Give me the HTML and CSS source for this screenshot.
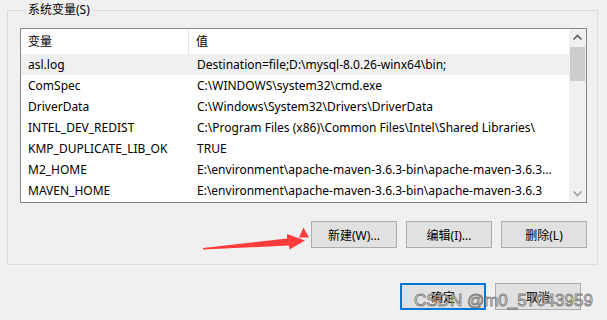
FILE: index.html
```html
<!DOCTYPE html>
<html lang="zh-CN">
<head>
<meta charset="utf-8">
<title>系统变量</title>
<link rel="stylesheet" href="styles.css">
</head>
<body>
<fieldset class="group">
  <legend class="group-title">系统变量(S)</legend>
  <div class="listbox">
    <div class="list">
      <div class="row head"><div class="c1">变量</div><div class="c2">值</div></div>
      <div class="row sel"><div class="c1">asl.log</div><div class="c2">Destination=file;D:\mysql-8.0.26-winx64\bin;</div></div>
      <div class="row"><div class="c1">ComSpec</div><div class="c2">C:\WINDOWS\system32\cmd.exe</div></div>
      <div class="row"><div class="c1">DriverData</div><div class="c2">C:\Windows\System32\Drivers\DriverData</div></div>
      <div class="row"><div class="c1">INTEL_DEV_REDIST</div><div class="c2">C:\Program Files (x86)\Common Files\Intel\Shared Libraries\</div></div>
      <div class="row"><div class="c1">KMP_DUPLICATE_LIB_OK</div><div class="c2">TRUE</div></div>
      <div class="row"><div class="c1">M2_HOME</div><div class="c2">E:\environment\apache-maven-3.6.3-bin\apache-maven-3.6.3...</div></div>
      <div class="row"><div class="c1">MAVEN_HOME</div><div class="c2">E:\environment\apache-maven-3.6.3-bin\apache-maven-3.6.3</div></div>
    </div>
    <div class="scrollbar">
      <div class="sb-btn"><svg width="17" height="17" viewBox="0 0 17 17"><polyline points="4.5,10.5 8.5,6.5 12.5,10.5" fill="none" stroke="#606060" stroke-width="1.6"/></svg></div>
      <div class="track"><div class="thumb"></div></div>
      <div class="sb-btn"><svg width="17" height="17" viewBox="0 0 17 17"><polyline points="4.5,6.5 8.5,10.5 12.5,6.5" fill="none" stroke="#a0a0a0" stroke-width="1.6"/></svg></div>
    </div>
  </div>
  <div class="actions">
    <button class="btn">新建(W)...</button>
    <button class="btn">编辑(I)...</button>
    <button class="btn">删除(L)</button>
  </div>
</fieldset>
<div class="footer">
  <button class="btn primary">确定</button>
  <button class="btn">取消</button>
</div>
<span class="watermark">CSDN @m0_57043959</span>
<svg class="annot" width="607" height="320" viewBox="0 0 607 320">
  <polygon points="203,248 287,238.5 287,234 305,240.5 289.5,249.5 289,245.5 203,249.5" fill="#ff3b3b"/>
  <polygon points="303.5,227.5 309,237.5 299,237.5" fill="#ff3b3b"/>
</svg>
</body>
</html>
```

FILE: styles.css
```css
html, body {
  margin: 0;
  padding: 0;
}
body {
  position: relative;
  width: 607px;
  height: 320px;
  overflow: hidden;
  background: #f0f0f0;
  font-family: "Noto Sans", "Noto Sans CJK SC", sans-serif;
  font-size: 12px;
  color: #000;
  padding-top: 2px;
  box-sizing: border-box;
}
.group {
  margin: 0 9px 0 7px;
  padding: 10px 10px 16px 12px;
  border: 1px solid #dcdcdc;
  min-width: 0;
}
.group-title {
  padding: 0 2px;
  margin-left: 6px;
  line-height: 16px;
  height: 16px;
}
.listbox {
  display: flex;
  height: 175px;
  border: 1px solid #828790;
  background: #fff;
  box-sizing: border-box;
}
.list {
  flex: 1;
  overflow: hidden;
}
.row {
  display: flex;
  height: 21px;
  line-height: 21px;
  white-space: nowrap;
}
.row.head {
  height: 25px;
  line-height: 25px;
}
.row.sel {
  background: #f0f0f0;
}
.c1 {
  width: 168px;
  padding-left: 7px;
  box-sizing: border-box;
  overflow: hidden;
  flex: none;
}
.head .c1 {
  border-right: 1px solid #e5e5e5;
}
.c2 {
  padding-left: 7px;
  margin-left: 1px;
  overflow: hidden;
  flex: 1;
}
.head .c2 {
  margin-left: 0;
}
.scrollbar {
  width: 17px;
  flex: none;
  display: flex;
  flex-direction: column;
  background: #f0f0f0;
}
.sb-btn {
  height: 17px;
  flex: none;
}
.sb-btn svg {
  display: block;
}
.track {
  flex: 1;
  padding: 1px 1px 0 1px;
}
.thumb {
  height: 34px;
  background: #cdcdcd;
}
.actions {
  display: flex;
  justify-content: flex-end;
  gap: 9px;
  margin-top: 18px;
}
.btn {
  width: 86px;
  height: 27px;
  padding: 0;
  background: #e1e1e1;
  border: 1px solid #adadad;
  font-family: "Noto Sans", "Noto Sans CJK SC", sans-serif;
  font-size: 12px;
  color: #000;
  box-sizing: border-box;
}
.btn.primary {
  border: 2px solid #0078d7;
}
.footer {
  display: flex;
  justify-content: flex-end;
  gap: 9px;
  margin: 18px 26px 0 0;
}
.watermark {
  position: absolute;
  left: 414px;
  top: 291px;
  font-family: "Liberation Sans", sans-serif;
  font-size: 17px;
  line-height: 20px;
  color: rgba(255, 255, 255, 0.6);
  -webkit-text-stroke: 1px rgba(100, 100, 100, 0.75);
  white-space: nowrap;
}
.annot {
  position: absolute;
  left: 0;
  top: 0;
  pointer-events: none;
}
```
